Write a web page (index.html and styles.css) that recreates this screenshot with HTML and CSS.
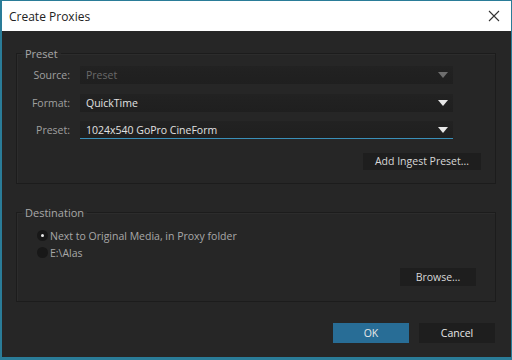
FILE: index.html
```html
<!DOCTYPE html>
<html>
  <head>
    <title>Create Proxies</title>
    <meta name="viewport" content="width=device-width,initial-scale=1">
    <link rel="stylesheet" href="styles.css">
  </head>
  <body>
    <div class="window">
      <div class="titlebar">
        <span class="title">Create Proxies</span>
        <svg class="close" width="12" height="12" viewBox="0 0 12 12">
          <path d="M1 1 L11 11 M11 1 L1 11" stroke="#333" stroke-width="1.1" fill="none"/>
        </svg>
      </div>
      <div class="content">
        <fieldset class="group preset-group">
          <legend>Preset</legend>
          <div class="row">
            <span class="label">Source:</span>
            <div class="combo disabled">
              <span>Preset</span>
              <span class="arrow"></span>
            </div>
          </div>
          <div class="row">
            <span class="label">Format:</span>
            <div class="combo">
              <span>QuickTime</span>
              <span class="arrow"></span>
            </div>
          </div>
          <div class="row">
            <span class="label">Preset:</span>
            <div class="combo focused">
              <span>1024x540 GoPro CineForm</span>
              <span class="arrow"></span>
            </div>
          </div>
          <div class="button-row">
            <button class="btn ingest">Add Ingest Preset...</button>
          </div>
        </fieldset>

        <fieldset class="group dest-group">
          <legend>Destination</legend>
          <div class="radios">
            <label class="radio checked"><span class="dot"></span>Next to Original Media, in Proxy folder</label>
            <label class="radio"><span class="dot"></span>E:\Alas</label>
          </div>
          <div class="button-row">
            <button class="btn browse">Browse...</button>
          </div>
        </fieldset>

        <div class="footer">
          <button class="btn ok">OK</button>
          <button class="btn cancel">Cancel</button>
        </div>
      </div>
    </div>
  </body>
</html>
```

FILE: styles.css
```css
html, body {
  margin: 0;
  padding: 0;
  background: #262626;
}

body {
  font-family: "Open Sans", "Noto Sans", sans-serif;
  font-size: 10.5px;
}

.window {
  width: 512px;
  height: 360px;
  box-sizing: border-box;
  border: 1px solid #2a7c98;
  border-left-width: 2px;
  border-bottom-width: 3px;
  display: flex;
  flex-direction: column;
  background: #262626;
}

.titlebar {
  height: 30px;
  background: #ffffff;
  display: flex;
  align-items: center;
  justify-content: space-between;
  padding: 0 11px 0 7px;
  flex-shrink: 0;
}

.title {
  font-size: 12px;
  color: #222;
}

.content {
  flex: 1;
  padding: 15px 15px 0 14px;
  display: flex;
  flex-direction: column;
}

.group {
  margin: 0;
  border: 1px solid #1c1c1c;
  box-shadow: inset 1px 1px 0 #2c2c2c;
  padding: 0;
}

.group legend {
  color: #a8a8a8;
  padding: 0 3px;
  margin-left: 5px;
  font-size: 11px;
  line-height: 15px;
}

.preset-group {
  height: 138px;
  box-sizing: border-box;
  padding: 5px 42px 0 0;
  flex-shrink: 0;
}

.row {
  display: flex;
  align-items: center;
  height: 18px;
  margin-bottom: 9.5px;
}

.label {
  width: 53px;
  text-align: right;
  color: #a0a0a0;
  margin-right: 10px;
}

.combo {
  flex: 1;
  height: 18px;
  box-sizing: border-box;
  background: linear-gradient(#222222, #1f1f1f);
  display: flex;
  align-items: center;
  justify-content: space-between;
  padding: 0 5px 0 6px;
  color: #e2e2e2;
}

.combo.disabled {
  color: #6a6a6a;
}

.combo.focused {
  border-bottom: 1px solid #3a8fb8;
}

.arrow {
  width: 0;
  height: 0;
  border-left: 5px solid transparent;
  border-right: 5px solid transparent;
  border-top: 6px solid #e8e8e8;
}

.combo.disabled .arrow {
  border-top-color: #6e6e6e;
}

.button-row {
  display: flex;
  justify-content: flex-end;
}

.btn {
  font-family: inherit;
  font-size: 10.5px;
  border: none;
  background: #1e1e1e;
  color: #d8d8d8;
  height: 18px;
  padding: 0;
}

.ingest {
  width: 118px;
  height: 17px;
  margin-top: 4px;
  margin-right: -28px;
}

.dest-group {
  margin-top: 21px;
  height: 97px;
  box-sizing: border-box;
  padding: 8px 19px 0 0;
  flex-shrink: 0;
}

.radios {
  display: flex;
  flex-direction: column;
  gap: 2px;
  padding-left: 20px;
}

.radio {
  display: flex;
  align-items: center;
  color: #a8a8a8;
  height: 15px;
}

.dot {
  width: 11px;
  height: 11px;
  border-radius: 50%;
  background: #181818;
  margin-right: 2px;
  position: relative;
}

.radio.checked .dot::after {
  content: "";
  position: absolute;
  left: 4px;
  top: 4px;
  width: 3px;
  height: 3px;
  border-radius: 50%;
  background: #e8e8e8;
}

.browse {
  width: 76px;
  margin-top: 8px;
}

.footer {
  display: flex;
  justify-content: flex-end;
  gap: 10px;
  margin-top: 21px;
  margin-right: 1px;
}

.ok {
  width: 76px;
  height: 20px;
  background: #286d96;
  color: #e8e8e8;
}

.cancel {
  width: 76px;
  height: 20px;
  background: #1e1e1e;
  color: #e8e8e8;
}
```
